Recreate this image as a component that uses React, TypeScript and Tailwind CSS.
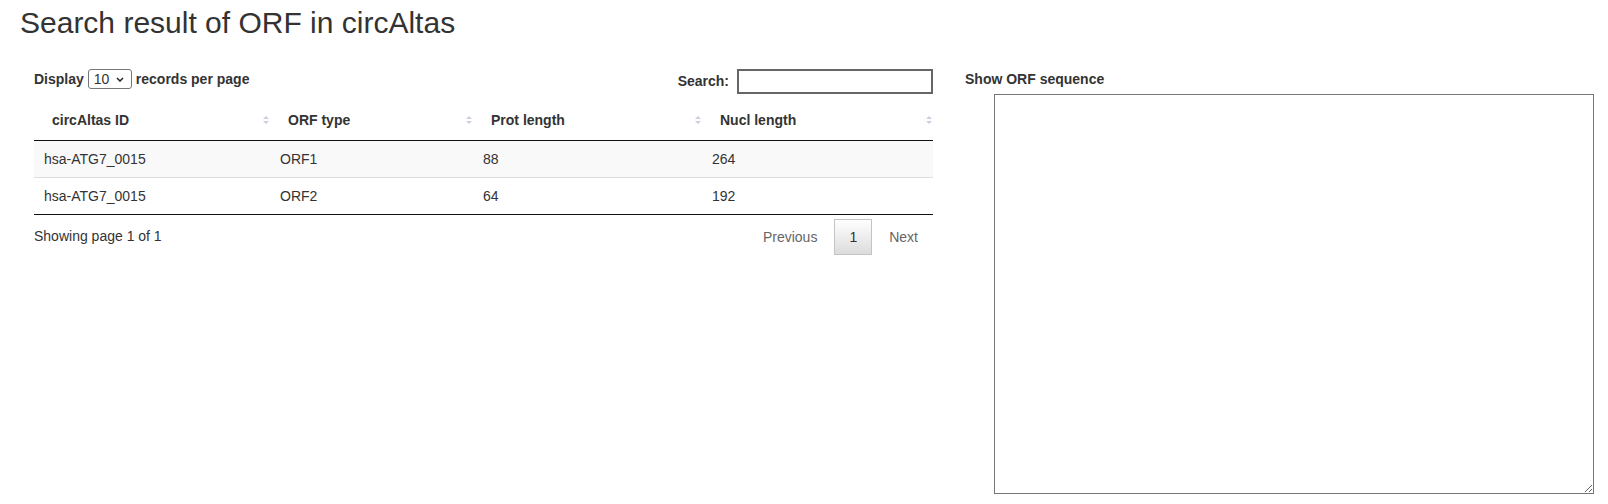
const columns = [
  { label: "circAltas ID", width: "w-[236px]" },
  { label: "ORF type", width: "w-[203px]" },
  { label: "Prot length", width: "w-[229px]" },
  { label: "Nucl length", width: "w-[231px]" },
];

const orfs = [
  { id: "hsa-ATG7_0015", type: "ORF1", prot: 88, nucl: 264 },
  { id: "hsa-ATG7_0015", type: "ORF2", prot: 64, nucl: 192 },
];

function SortIcon() {
  return (
    <svg width="6" height="8" viewBox="0 0 6 8" className="shrink-0">
      <polygon points="3,0 6,3 0,3" fill="#c8d2de" />
      <polygon points="0,5 6,5 3,8" fill="#c8d2de" />
    </svg>
  );
}

export default function App() {
  return (
    <div className="min-h-[504px] bg-white px-[20px] font-['Liberation_Sans',Arial,sans-serif] text-[14px] text-[#333]">
      <h2 className="pt-[6px] text-[30px] font-normal leading-[33px]">
        Search result of ORF in circAltas
      </h2>

      <div className="mt-[30px] flex items-start">
        {/* result table */}
        <div className="ml-[14px] w-[899px]">
          <div className="flex h-[25px] items-start justify-between">
            <div className="flex h-[20px] items-center font-bold leading-[20px]">
              <span>Display</span>
              <span className="ml-[4px] flex h-[20px] w-[44px] items-center rounded-[3px] border border-[#767676] pl-[5px] font-normal">
                10
                <svg width="8" height="5" viewBox="0 0 8 5" className="ml-[7px]">
                  <polyline points="1,1 4,4 7,1" fill="none" stroke="#222" strokeWidth="1.5" />
                </svg>
              </span>
              <span className="ml-[4px]">records per page</span>
            </div>
            <div className="flex h-[25px] items-center font-bold">
              <span>Search:</span>
              <input
                type="text"
                className="ml-[8px] h-[25px] w-[196px] border-2 border-[#666] px-1 outline-none"
              />
            </div>
          </div>

          <table className="mt-[6px] w-[899px] table-fixed border-separate border-spacing-0">
            <thead>
              <tr>
                {columns.map((c) => (
                  <th key={c.label} className={`${c.width} border-b border-[#111] p-0 text-left font-bold`}>
                    <div className="flex h-[40px] items-center justify-between pl-[18px] pr-[1px]">
                      <span>{c.label}</span>
                      <SortIcon />
                    </div>
                  </th>
                ))}
              </tr>
            </thead>
            <tbody>
              {orfs.map((r, i) => {
                const cls =
                  i === 0
                    ? "border-b border-[#ddd] bg-[#f9f9f9] p-0"
                    : "border-b border-[#111] bg-white p-0";
                return (
                  <tr key={r.type}>
                    {[r.id, r.type, r.prot, r.nucl].map((v, j) => (
                      <td key={j} className={cls}>
                        <div className="flex h-[36px] items-center px-[10px] leading-[20px]">{v}</div>
                      </td>
                    ))}
                  </tr>
                );
              })}
            </tbody>
          </table>

          <div className="flex items-start justify-between">
            <div className="pt-[11px] leading-[20px]">Showing page 1 of 1</div>
            <div className="flex pt-[4px] leading-[20px]">
              <span className="border border-transparent px-[14px] py-[7px] text-[#666]">Previous</span>
              <span className="ml-[2px] border border-[#c4c4c4] bg-linear-to-b from-white to-[#dcdcdc] px-[14px] py-[7px] text-[#333]">
                1
              </span>
              <span className="ml-[2px] border border-transparent px-[14px] py-[7px] text-[#666]">Next</span>
            </div>
          </div>
        </div>

        {/* sequence viewer */}
        <div className="ml-[32px]">
          <div className="font-bold leading-[20px]">Show ORF sequence</div>
          <textarea className="mt-[5px] ml-[29px] block h-[400px] w-[600px] resize border border-[#767676] bg-white" />
        </div>
      </div>
    </div>
  );
}
